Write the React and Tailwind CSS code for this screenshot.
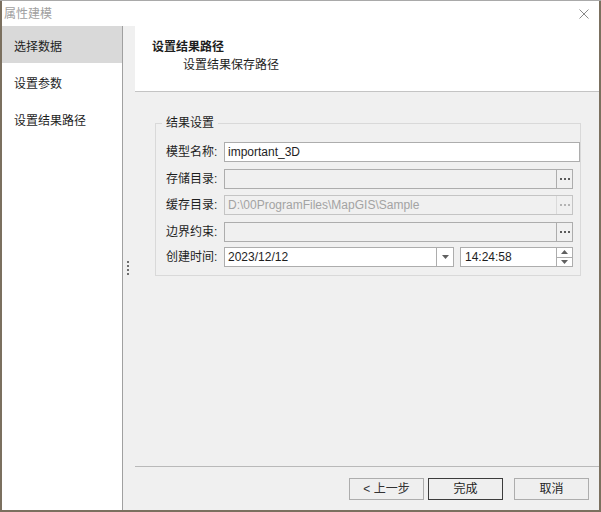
import React from "react";

const FONT = "font-['Liberation_Sans','Noto_Sans_CJK_SC',sans-serif]";

const steps = ["选择数据", "设置参数", "设置结果路径"];

function DotsButton({ disabled }) {
    return (
        <div
            className={
                disabled
                    ? "flex w-[16px] items-center justify-center border-l border-[#dadada]"
                    : "flex w-[16px] items-center justify-center border-l border-[#adadad]"
            }
        >
            <div className="flex gap-[2px]">
                {[0, 1, 2].map((i) => (
                    <span
                        key={i}
                        className={
                            disabled
                                ? "h-[2px] w-[2px] bg-[#b4b4b4]"
                                : "h-[2px] w-[2px] bg-[#5a5a5a]"
                        }
                    />
                ))}
            </div>
        </div>
    );
}

function FieldRow({ label, className = "", children }) {
    return (
        <div className={`flex h-[20px] items-center ${className}`}>
            <span className="w-[58px] shrink-0 text-[12px] leading-[16px] text-[#1e1e1e]">
                {label}
            </span>
            {children}
        </div>
    );
}

function TriangleDown({ className = "" }) {
    return (
        <svg width="7" height="4" viewBox="0 0 7 4" className={className}>
            <path d="M0 0H7L3.5 4Z" fill="#606060" />
        </svg>
    );
}

function TriangleUp({ className = "" }) {
    return (
        <svg width="7" height="4" viewBox="0 0 7 4" className={className}>
            <path d="M0 4H7L3.5 0Z" fill="#606060" />
        </svg>
    );
}

export default function App() {
    return (
        <div
            className={`${FONT} h-[512px] w-[601px] overflow-hidden border-t border-[#a9a9a9] bg-[#7b705f] pl-[2px] pr-[2px] pb-[2px]`}
        >
            <div className="flex h-[509px] w-[597px] flex-col bg-white">
                {/* title bar */}
                <div className="flex h-[25px] shrink-0 items-center justify-between bg-white pl-[2px] pr-[10px]">
                    <span className="text-[12px] leading-[16px] text-[#a0a0a0]">属性建模</span>
                    <svg width="10" height="10" viewBox="0 0 10 10">
                        <path d="M0.5 0.5L9.5 9.5M9.5 0.5L0.5 9.5" stroke="#8a8a8a" strokeWidth="1" />
                    </svg>
                </div>

                <div className="flex min-h-0 flex-1">
                    {/* step list */}
                    <div className="w-[121px] shrink-0 border-r border-[#a0a0a0] bg-white">
                        {steps.map((step, index) => (
                            <div
                                key={step}
                                className={
                                    index === 0
                                        ? "flex h-[37px] items-center bg-[#d9d9d9] pl-[12px] pt-[4px] text-[12px] text-[#1e1e1e]"
                                        : "flex h-[37px] items-center pl-[12px] pt-[4px] text-[12px] text-[#1e1e1e]"
                                }
                            >
                                {step}
                            </div>
                        ))}
                    </div>

                    <div className="flex min-w-0 flex-1 bg-[#f0f0f0]">
                        {/* splitter grip */}
                        <div className="flex w-[12px] shrink-0 flex-col justify-center gap-[2px] pl-[4px]">
                            {[0, 1, 2, 3].map((i) => (
                                <span key={i} className="h-[2px] w-[2px] bg-[#6e6e6e]" />
                            ))}
                        </div>

                        <div className="flex min-w-0 flex-1 flex-col">
                            {/* header */}
                            <div className="h-[66px] shrink-0 border-b border-[#c4c4c4] bg-white pl-[17px] pt-[13px]">
                                <p className="text-[12px] font-bold leading-[16px] text-[#1e1e1e]">
                                    设置结果路径
                                </p>
                                <p className="ml-[31px] mt-[2px] text-[12px] leading-[16px] text-[#1e1e1e]">
                                    设置结果保存路径
                                </p>
                            </div>

                            {/* content */}
                            <div className="flex-1">
                                <fieldset className="ml-[20px] mt-[23px] w-[426px] border border-[#d9d9d9] pb-[8px] pl-[10px]">
                                    <legend className="ml-[-4px] px-[4px] text-[12px] leading-[16px] text-[#1e1e1e]">
                                        结果设置
                                    </legend>

                                    <FieldRow label="模型名称:" className="mt-[11px]">
                                        <div className="flex h-[20px] flex-1 items-center border border-[#adadad] bg-white pl-[3px] text-[12px] text-[#1e1e1e]">
                                            important_3D
                                        </div>
                                    </FieldRow>

                                    <FieldRow label="存储目录:" className="mt-[7px]">
                                        <div className="mr-[7px] flex h-[20px] flex-1 border border-[#adadad] bg-[#f0f0f0]">
                                            <div className="flex-1" />
                                            <DotsButton />
                                        </div>
                                    </FieldRow>

                                    <FieldRow label="缓存目录:" className="mt-[6px]">
                                        <div className="mr-[7px] flex h-[20px] flex-1 border border-[#c4c4c4] bg-[#f0f0f0]">
                                            <div className="flex flex-1 items-center pl-[3px] text-[12px] text-[#a3a3a3]">
                                                D:\00ProgramFiles\MapGIS\Sample
                                            </div>
                                            <DotsButton disabled />
                                        </div>
                                    </FieldRow>

                                    <FieldRow label="边界约束:" className="mt-[7px]">
                                        <div className="mr-[7px] flex h-[20px] flex-1 border border-[#adadad] bg-[#f0f0f0]">
                                            <div className="flex-1" />
                                            <DotsButton />
                                        </div>
                                    </FieldRow>

                                    <FieldRow label="创建时间:" className="mt-[5px]">
                                        <div className="flex h-[20px] w-[230px] border border-[#adadad] bg-white">
                                            <div className="flex flex-1 items-center pl-[3px] text-[12px] text-[#1e1e1e]">
                                                2023/12/12
                                            </div>
                                            <div className="flex w-[17px] items-center justify-center border-l border-[#adadad]">
                                                <TriangleDown />
                                            </div>
                                        </div>
                                        <div className="ml-[6px] flex h-[20px] w-[113px] border border-[#adadad] bg-white">
                                            <div className="flex flex-1 items-center pl-[4px] text-[12px] text-[#1e1e1e]">
                                                14:24:58
                                            </div>
                                            <div className="flex w-[16px] flex-col border-l border-[#adadad]">
                                                <div className="flex flex-1 items-center justify-center border-b border-[#adadad]">
                                                    <TriangleUp />
                                                </div>
                                                <div className="flex flex-1 items-center justify-center">
                                                    <TriangleDown />
                                                </div>
                                            </div>
                                        </div>
                                    </FieldRow>
                                </fieldset>
                            </div>

                            {/* footer */}
                            <div className="flex h-[44px] shrink-0 justify-end gap-[4px] border-t border-[#b9b9b9] pr-[10px] pt-[11px]">
                                <button className="flex h-[22px] w-[75px] items-center justify-center border border-[#adadad] bg-[#efefef] text-[12px] text-[#333333]">
                                    &lt; 上一步
                                </button>
                                <button className="flex h-[22px] w-[75px] items-center justify-center border border-[#3c3c3c] bg-[#efefef] text-[12px] text-[#1e1e1e]">
                                    完成
                                </button>
                                <button className="ml-[7px] flex h-[22px] w-[75px] items-center justify-center border border-[#adadad] bg-[#efefef] text-[12px] text-[#1e1e1e]">
                                    取消
                                </button>
                            </div>
                        </div>
                    </div>
                </div>
            </div>
        </div>
    );
}
